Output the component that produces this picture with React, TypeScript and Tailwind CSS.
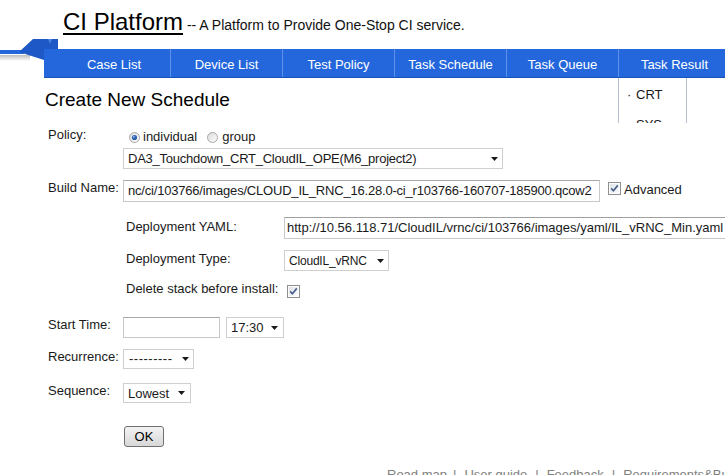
import React from "react";

function Arrow() {
  return (
    <svg width="7" height="4" viewBox="0 0 7 4" className="shrink-0">
      <polygon points="0,0 7,0 3.5,4" fill="#1a1a1a" />
    </svg>
  );
}

function Radio({ checked }: { checked?: boolean }) {
  return (
    <svg width="11" height="11" viewBox="0 0 11 11" className="shrink-0">
      <defs>
        <linearGradient id={checked ? "rg1" : "rg2"} x1="0" y1="0" x2="1" y2="1">
          <stop offset="0" stopColor="#d9d9d9" />
          <stop offset="1" stopColor="#ffffff" />
        </linearGradient>
      </defs>
      <circle cx="5.5" cy="5.5" r="5" fill={`url(#${checked ? "rg1" : "rg2"})`} stroke="#a8a8a8" strokeWidth="1" />
      {checked && <circle cx="5.5" cy="5.5" r="2.6" fill="#2c62b0" />}
      {checked && <circle cx="4.8" cy="4.8" r="1" fill="#8fb4e6" />}
    </svg>
  );
}

function Check() {
  return (
    <svg width="13" height="13" viewBox="0 0 13 13" className="shrink-0">
      <defs>
        <linearGradient id="cbg" x1="0" y1="0" x2="1" y2="1">
          <stop offset="0" stopColor="#dfe4ea" />
          <stop offset="1" stopColor="#fbfcfd" />
        </linearGradient>
      </defs>
      <rect x="0.5" y="0.5" width="12" height="12" fill="#ffffff" stroke="#8e8f8f" />
      <rect x="2" y="2" width="9" height="9" fill="url(#cbg)" />
      <path d="M3.2 6.4 L5.4 8.8 L9.8 3.4" fill="none" stroke="#4a5f8a" strokeWidth="1.7" />
    </svg>
  );
}

export default function App() {
  return (
    <div className="relative w-[725px] h-[475px] overflow-hidden bg-white text-[13px] text-[#1a1a1a] font-['Liberation_Sans',Arial,sans-serif]">
      {/* header */}
      <div className="h-[49px] pl-[63px] pt-[8px] leading-[28px] whitespace-nowrap">
        <span className="text-[24px] text-black underline decoration-2 underline-offset-[3px]">CI Platform</span>
        <span className="text-[14px] text-[#111]"> -- A Platform to Provide One-Stop CI service.</span>
      </div>

      {/* ribbon tail decoration */}
      <svg className="absolute left-0 top-0" width="60" height="66" viewBox="0 0 60 66">
        <defs>
          <linearGradient id="sh" x1="0" y1="0" x2="0" y2="1">
            <stop offset="0" stopColor="#bdbdbd" />
            <stop offset="1" stopColor="#ffffff" />
          </linearGradient>
        </defs>
        <rect x="0" y="55" width="30" height="6" fill="url(#sh)" />
        <rect x="0" y="50" width="24" height="4" fill="#2467dc" />
        <polygon points="19,52 33,39 58,39 58,49 44,49 44,60" fill="#1d58c6" />
        <polygon points="48,39 52,39 50,44" fill="#4a83e0" />
      </svg>

      {/* nav */}
      <nav className="relative ml-[44px] h-[29px] bg-[#2467dc] border-b border-[#1a52b8] flex pl-[14px] text-white text-[13px]">
        {["Case List", "Device List", "Test Policy", "Task Schedule", "Task Queue", "Task Result"].map((t, i) => (
          <div
            key={t}
            className={
              i === 0
                ? "w-[112px] shrink-0 text-center leading-[24px] pt-[4px]"
                : "w-[112px] shrink-0 text-center leading-[24px] pt-[4px] border-l border-[#5d90e6]"
            }
          >
            {t}
          </div>
        ))}
        <div className="absolute left-[574px] top-[29px] w-[69px] h-[45px] overflow-hidden bg-white border-x border-[#b4bfd0] text-[#1a1a1a] z-10">
          <div className="pl-[8px] pt-[9px] leading-[16px]">
            <div className="flex items-center h-[16px]">
              <span className="w-[9px]">·</span>
              <span>CRT</span>
            </div>
            <div className="flex items-center h-[16px] mt-[14px]">
              <span className="w-[9px]">·</span>
              <span>SYS</span>
            </div>
          </div>
        </div>
      </nav>

      {/* content */}
      <div className="pl-[45px]">
        <h1 className="mt-[10px] text-[19px] leading-[24px] text-black">Create New Schedule</h1>

        <div className="ml-[3px]">
          {/* Policy */}
          <div className="mt-[15px] h-[18px] flex items-start">
            <div className="w-[75px] shrink-0 leading-[16px]">Policy:</div>
            <div className="flex items-center pt-[2px] leading-[16px] ml-[6px]">
              <Radio checked />
              <span className="ml-[3px]">individual</span>
              <span className="ml-[10px] flex items-center">
                <Radio />
              </span>
              <span className="ml-[4px]">group</span>
            </div>
          </div>

          {/* policy select */}
          <div className="mt-[3px] ml-[75px] w-[380px] h-[21px] border border-[#cfcfcf] bg-white flex items-center justify-between pl-[4px] pr-[4px] whitespace-nowrap">
            <span className="tracking-[-0.25px]">DA3_Touchdown_CRT_CloudIL_OPE(M6_project2)</span>
            <Arrow />
          </div>

          {/* Build name */}
          <div className="mt-[11px] flex items-start">
            <div className="w-[75px] shrink-0 leading-[16px]">Build Name:</div>
            <div className="w-[477px] h-[22px] shrink-0 border border-[#c8c8c8] border-t-[#a8a8a8] bg-white flex items-center overflow-hidden whitespace-nowrap pl-[4px]">
              <span className="tracking-[-0.2px]">nc/ci/103766/images/CLOUD_IL_RNC_16.28.0-ci_r103766-160707-185900.qcow2</span>
            </div>
            <div className="ml-[8px] pt-[2px] flex items-start shrink-0">
              <Check />
              <span className="ml-[3px] leading-[16px]">Advanced</span>
            </div>
          </div>

          {/* Advanced sub-form */}
          <div className="ml-[78px]">
            <div className="mt-[15px] flex items-start">
              <div className="w-[158px] shrink-0 leading-[16px] pt-[2px]">Deployment YAML:</div>
              <div className="w-[470px] h-[22px] shrink-0 border border-[#c8c8c8] border-t-[#a0a0a0] bg-white flex items-center pl-[2px] whitespace-nowrap overflow-hidden">
                <span>http://10.56.118.71/CloudIL/vrnc/ci/103766/images/yaml/IL_vRNC_Min.yaml</span>
              </div>
            </div>

            <div className="mt-[11px] flex items-start">
              <div className="w-[158px] shrink-0 leading-[16px] pt-[1px]">Deployment Type:</div>
              <div className="w-[105px] h-[21px] shrink-0 border border-[#cfcfcf] bg-white flex items-center justify-between pl-[4px] pr-[4px] whitespace-nowrap">
                <span className="text-[12px] tracking-[-0.2px]">CloudIL_vRNC</span>
                <Arrow />
              </div>
            </div>

            <div className="mt-[10px] flex items-start">
              <div className="w-[158px] shrink-0 leading-[16px] pt-[0px]">Delete stack before install:</div>
              <div className="ml-[3px] mt-[4px]">
                <Check />
              </div>
            </div>
          </div>

          {/* Start time */}
          <div className="mt-[19px] flex items-start">
            <div className="w-[75px] shrink-0 leading-[16px]">Start Time:</div>
            <div className="w-[97px] h-[21px] shrink-0 border border-[#c8c8c8] border-t-[#a8a8a8] bg-white" />
            <div className="ml-[6px] w-[58px] h-[21px] shrink-0 border border-[#cfcfcf] bg-white flex items-center justify-between pl-[4px] pr-[5px]">
              <span>17:30</span>
              <Arrow />
            </div>
          </div>

          {/* Recurrence */}
          <div className="mt-[11px] flex items-start">
            <div className="w-[75px] shrink-0 leading-[16px]">Recurrence:</div>
            <div className="w-[71px] h-[20px] shrink-0 border border-[#cfcfcf] bg-white flex items-center justify-between pl-[5px] pr-[4px]">
              <span className="tracking-[0.5px]">---------</span>
              <Arrow />
            </div>
          </div>

          {/* Sequence */}
          <div className="mt-[14px] flex items-start">
            <div className="w-[75px] shrink-0 leading-[16px]">Sequence:</div>
            <div className="w-[68px] h-[20px] shrink-0 border border-[#cfcfcf] bg-white flex items-center justify-between pl-[4px] pr-[5px]">
              <span className="pt-[2px]">Lowest</span>
              <Arrow />
            </div>
          </div>

          {/* OK */}
          <div className="mt-[23px] ml-[76px]">
            <button className="w-[40px] h-[21px] border border-[#707070] rounded-[3px] bg-gradient-to-b from-[#f3f3f3] to-[#d8d8d8] text-[13px] text-black leading-[19px]">
              OK
            </button>
          </div>

          {/* footer */}
          <div className="mt-[20px] ml-[339px] leading-[16px] text-[#808080] whitespace-nowrap">
            <span>Road map</span>
            <span className="ml-[6px] mr-[8px]">|</span>
            <span>User guide</span>
            <span className="ml-[8px] mr-[8px]">|</span>
            <span>Feedback</span>
            <span className="ml-[8px] mr-[8px]">|</span>
            <span>Requirements&amp;Bugs</span>
          </div>
        </div>
      </div>
    </div>
  );
}
